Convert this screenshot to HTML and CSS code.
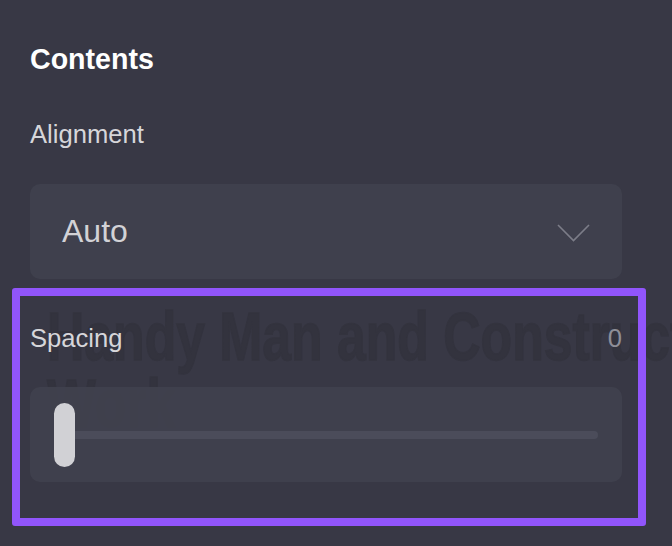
FILE: index.html
```html
<!DOCTYPE html>
<html lang="en">
<head>
<meta charset="utf-8">
<title>Contents</title>
<link rel="stylesheet" href="styles.css">
</head>
<body>
<div class="panel">
  <h2 class="title">Contents</h2>
  <div class="label">Alignment</div>
  <div class="select">
    <span class="select-value">Auto</span>
    <svg class="chevron" width="33" height="18" viewBox="0 0 33 18" aria-hidden="true">
      <polyline points="1,1 16.5,16.5 32,1" fill="none" stroke="#7c7d88" stroke-width="1.6"/>
    </svg>
  </div>
  <div class="spacing-section">
    <div class="ghost" aria-hidden="true">Handy Man and Construction<br>Work</div>
    <div class="row">
      <span class="label">Spacing</span>
      <span class="value">0</span>
    </div>
    <div class="slider">
      <div class="track"><div class="thumb"></div></div>
    </div>
  </div>
  <div class="highlight"></div>
</div>
</body>
</html>
```

FILE: styles.css
```css
html, body {
  margin: 0;
  padding: 0;
  background: #383845;
  width: 672px;
  height: 546px;
  overflow: hidden;
}
body {
  font-family: "Liberation Sans", Arial, sans-serif;
}
.panel {
  position: relative;
  padding: 42px 50px 0 30px;
  width: 592px;
}
.title {
  margin: 0;
  font-size: 28.6px;
  line-height: 34px;
  font-weight: 700;
  color: #ffffff;
}
.label {
  font-size: 25.6px;
  line-height: 30px;
  color: #d6d6da;
}
.panel > .label {
  margin-top: 43px;
}
.select {
  margin-top: 35px;
  height: 95px;
  border-radius: 10px;
  background: #3f404d;
  display: flex;
  align-items: center;
  justify-content: space-between;
  padding: 0 32px;
}
.select-value {
  font-size: 32px;
  line-height: 95px;
  color: #d2d2d6;
}
.chevron {
  display: block;
  margin-top: 2px;
}
.spacing-section {
  position: relative;
  margin-top: 44px;
  overflow: visible;
}
.ghost {
  position: absolute;
  left: 17px;
  top: -20px;
  width: 820px;
  font-family: "Liberation Sans", Arial, sans-serif;
  font-weight: 700;
  font-size: 68px;
  line-height: 67px;
  color: #33333e;
  -webkit-text-stroke: 1.5px #33333e;
  white-space: nowrap;
  transform: scaleX(0.76);
  transform-origin: 0 0;
}
.row {
  position: relative;
  display: flex;
  justify-content: space-between;
  align-items: baseline;
}
.value {
  font-size: 25.6px;
  line-height: 30px;
  color: #8e8e98;
}
.slider {
  position: relative;
  margin-top: 34px;
  height: 95px;
  border-radius: 10px;
  background: rgba(64, 65, 78, 0.94);
  display: flex;
  align-items: center;
  padding: 0 24px;
}
.track {
  position: relative;
  flex: 1;
  height: 8px;
  border-radius: 4px;
  background: #4b4c5a;
}
.thumb {
  position: absolute;
  left: 0;
  top: -28px;
  width: 21px;
  height: 64px;
  border-radius: 11px;
  background: #d1d1d5;
}
.highlight {
  position: absolute;
  left: 12px;
  top: 288px;
  width: 618px;
  height: 222px;
  border: 8px solid #9155fb;
  border-radius: 3px;
}
```
